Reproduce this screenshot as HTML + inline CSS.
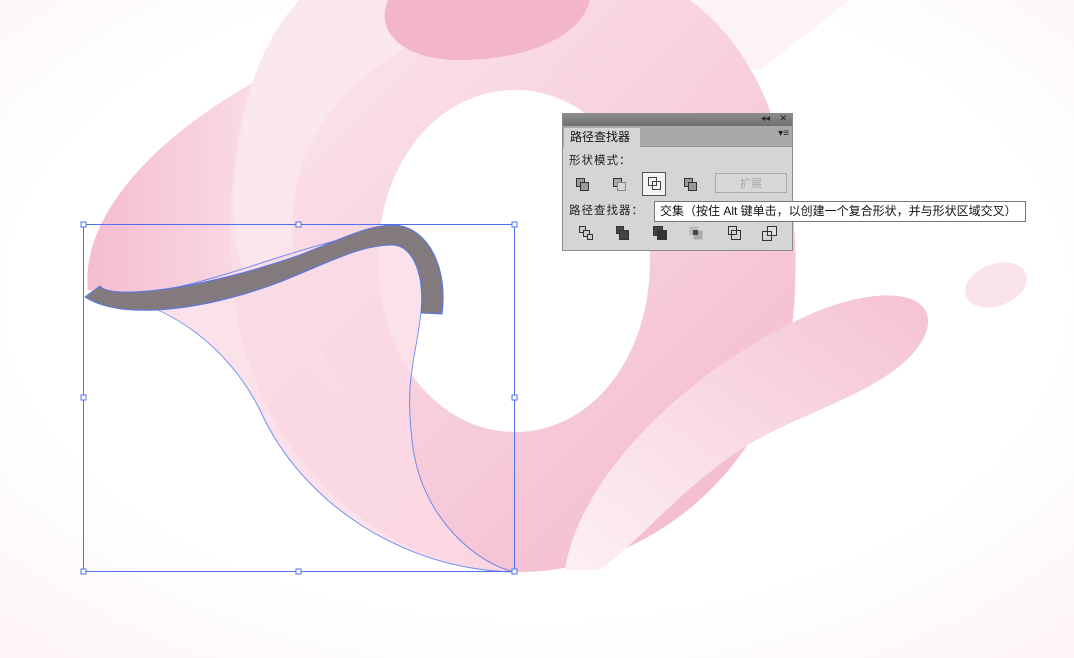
<!DOCTYPE html>
<html><head><meta charset="utf-8"><style>
body{margin:0;width:1074px;height:658px;overflow:hidden;background:#fff;font-family:"Liberation Sans","Noto Sans CJK SC",sans-serif;position:relative}
svg{position:absolute;left:0;top:0}
.panel{position:absolute;left:562px;top:113px;width:231px;height:138px;background:#d5d5d5;border:1px solid #8a8a8a;box-sizing:border-box}
.tb{height:12px;background:linear-gradient(#8c8c8c,#6f6f6f);position:relative;color:#222;font-size:9px}
.tabrow{height:20px;background:#a9a9a9;position:relative;border-bottom:1px solid #999}
.tab{position:absolute;left:1px;top:2px;width:76px;height:19px;background:#d5d5d5;font-size:12px;line-height:19px;padding-left:6px;box-sizing:border-box;color:#111}
.lbl{position:absolute;font-size:11.5px;color:#222;letter-spacing:1px}
.tip{position:absolute;left:654px;top:201px;width:372px;height:21px;background:#fff;border:1px solid #777;box-sizing:border-box;font-size:12px;line-height:19px;padding-left:5px;color:#111;white-space:nowrap}
</style></head><body>
<svg width="1074" height="658" viewBox="0 0 1074 658">
<defs>
<linearGradient id="g1" x1="0" y1="0" x2="1" y2="1"><stop offset="0" stop-color="#fce8ef"/><stop offset="1" stop-color="#f3b8cb"/></linearGradient>
<linearGradient id="g2" x1="0" y1="0" x2="1" y2="0"><stop offset="0" stop-color="#f4bccf"/><stop offset="1" stop-color="#fbe6ee"/></linearGradient>
<linearGradient id="g3" x1="1" y1="0" x2="0" y2="1"><stop offset="0" stop-color="#f5c2d3"/><stop offset="1" stop-color="#fdf0f5"/></linearGradient>
<radialGradient id="bg" cx="0.5" cy="0.45" r="0.7"><stop offset="0.7" stop-color="#fff"/><stop offset="1" stop-color="#fdf5f8"/></radialGradient>
</defs>
<rect width="1074" height="658" fill="url(#bg)"/>
<path d="M640 0 L850 0 L760 70 L700 60 Z" fill="#fdf2f6"/>
<path d="M88 290 C80 220 150 130 300 58 C330 50 290 150 270 240 C240 300 150 300 88 290 Z" fill="url(#g2)"/>
<path d="M300 0 L690 0 C770 60 800 170 795 290 C790 470 640 575 515 572 C390 570 270 470 240 330 C215 200 240 60 300 0 Z M515 90 C440 90 378 160 378 260 C378 360 440 432 515 432 C590 432 650 360 650 260 C650 160 590 90 515 90 Z" fill="url(#g1)" fill-rule="evenodd"/>
<path d="M300 0 L560 0 C420 20 330 80 300 170 C280 240 300 330 350 400 C290 360 240 300 235 230 C230 130 260 40 300 0Z" fill="#fbe9f0" opacity="0.7"/>
<path d="M388 0 L590 0 C580 40 520 60 460 60 C400 60 375 30 388 0Z" fill="#f3b5c8"/>
<path d="M565 570 C580 470 700 360 820 310 C900 280 940 300 925 335 C900 390 800 410 740 450 C680 490 640 540 600 570 Z" fill="url(#g3)"/>
<ellipse cx="996" cy="285" rx="32" ry="21" transform="rotate(-20 996 285)" fill="#fbe3ec"/>
<path d="M100 296 C200 300 330 225 390 236 C420 242 425 290 420 320 C415 360 405 380 412 440 C420 520 480 565 515 572 C400 570 300 500 260 410 C230 350 170 300 100 296Z" fill="#fbdbe6" opacity="0.8" stroke="#5577ee" stroke-width="1"/>
<path d="M85 297 L100 286 C110 300 200 290 300 255 C350 235 370 225 395 225 C430 228 448 270 442 314 L421 313 C425 280 415 245 392 245 C360 245 330 262 280 282 C200 312 120 320 85 297Z" fill="#837a7d" stroke="#5577ee" stroke-width="1"/>
<rect x="83.5" y="224.5" width="431" height="347" fill="none" stroke="#4f6ff0" stroke-width="1"/>
<g fill="#fff" stroke="#4f6ff0" stroke-width="1">
<rect x="81" y="222" width="5" height="5"/><rect x="296" y="222" width="5" height="5"/><rect x="512" y="222" width="5" height="5"/>
<rect x="81" y="395" width="5" height="5"/><rect x="512" y="395" width="5" height="5"/>
<rect x="81" y="569" width="5" height="5"/><rect x="296" y="569" width="5" height="5"/><rect x="512" y="569" width="5" height="5"/>
</g>
</svg>
<div class="panel">
<div class="tb"><span style="position:absolute;right:22px;top:-1px">◂◂</span><span style="position:absolute;right:5px;top:-1px">✕</span></div>
<div class="tabrow"><div class="tab">路径查找器</div><span style="position:absolute;right:3px;top:2px;font-size:10px;color:#222">▾≡</span></div>
<div class="lbl" style="left:6px;top:38px">形状模式：</div>
<svg style="left:0;top:0" width="231" height="138">
<g stroke="#333" fill="#999" stroke-width="1">
<rect x="13.5" y="64.5" width="8" height="8"/><rect x="17.5" y="68.5" width="8" height="8"/>
<rect x="50.5" y="64.5" width="8" height="8" fill="#aaa"/><rect x="54.5" y="68.5" width="8" height="8" fill="#d5d5d5" stroke="#888"/>
</g>
<rect x="79.5" y="58.5" width="23" height="23" fill="#f3f3f3" stroke="#555"/>
<g fill="none" stroke="#444"><rect x="85.5" y="63.5" width="8" height="8"/><rect x="89.5" y="67.5" width="8" height="8"/></g>
<g fill="#999" stroke="#333"><rect x="121.5" y="64.5" width="8" height="8"/><rect x="125.5" y="68.5" width="8" height="8" fill="#999"/></g>
<rect x="152.5" y="59.5" width="71" height="19" fill="#d8d8d8" stroke="#aaa"/>
<text x="177" y="73" font-size="11" fill="#aaa" font-family="Liberation Sans,Noto Sans CJK SC,sans-serif">扩展</text>
<g stroke="#333" fill="#ccc">
<rect x="16.5" y="112.5" width="6" height="6"/><rect x="20.5" y="116.5" width="6" height="6"/><rect x="24.5" y="120.5" width="5" height="5"/>
<rect x="53.5" y="112.5" width="7" height="7" fill="#444"/><rect x="56.5" y="116.5" width="9" height="9" fill="#444"/>
<rect x="90.5" y="112.5" width="9" height="9" fill="#444"/><rect x="94.5" y="116.5" width="9" height="9" fill="#333"/>
<rect x="126.5" y="112.5" width="9" height="9" fill="#bbb" stroke="none"/><rect x="130.5" y="116.5" width="9" height="9" fill="#aaa" stroke="none"/><rect x="130" y="116" width="5" height="5" fill="#444" stroke="none"/>
<rect x="165.5" y="112.5" width="8" height="8" fill="none"/><rect x="168.5" y="116.5" width="9" height="9" fill="none"/>
<rect x="204.5" y="112.5" width="9" height="9" fill="#ddd"/><rect x="199.5" y="117.5" width="9" height="9" fill="none"/>
</g>
</svg>
<div class="lbl" style="left:6px;top:88px">路径查找器：</div>
</div>
<div class="tip">交集（按住 Alt 键单击，以创建一个复合形状，并与形状区域交叉）</div>
</body></html>
